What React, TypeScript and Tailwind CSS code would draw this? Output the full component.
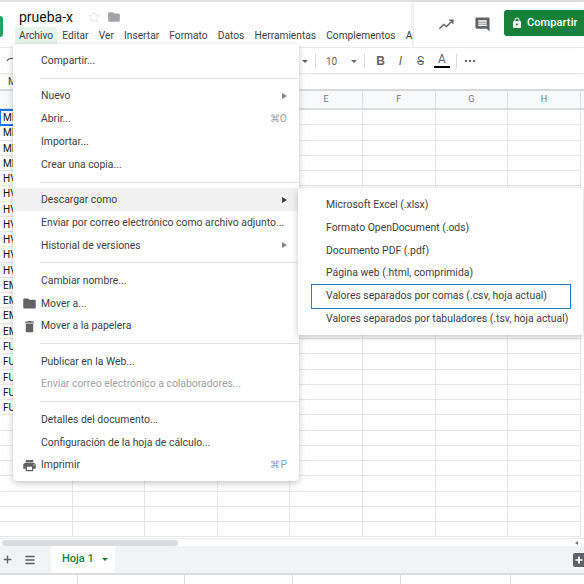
import React from "react";
import { MoreHorizontal, Plus, Star, Menu as MenuIcon } from "lucide-react";

const font = "font-['Roboto','Liberation_Sans',sans-serif]";
const labels = ["ME", "ME", "ME", "ME", "HV", "HV", "HV", "HV", "HV", "HV", "HV", "EM", "EM", "EM", "EM", "FU", "FU", "FU", "FU", "FU"];
const menus = ["Editar", "Ver", "Insertar", "Formato", "Datos", "Herramientas", "Complementos", "A"];

function FolderIcon({ className }: { className: string }) {
  return (
    <svg viewBox="0 0 24 24" className={className} fill="currentColor">
      <path d="M10 4H4C2.9 4 2 4.9 2 6v12c0 1.1.9 2 2 2h16c1.1 0 2-.9 2-2V8c0-1.1-.9-2-2-2h-8l-2-2z" />
    </svg>
  );
}

function TrashIcon() {
  return (
    <svg viewBox="0 0 24 24" className="w-[15px] h-[15px] text-[#5f6368]" fill="currentColor">
      <path d="M6 19c0 1.1.9 2 2 2h8c1.1 0 2-.9 2-2V7H6v12zM19 4h-3.5l-1-1h-5l-1 1H5v2h14V4z" />
    </svg>
  );
}

function PrintIcon() {
  return (
    <svg viewBox="0 0 24 24" className="w-[15px] h-[15px] text-[#5f6368]" fill="currentColor">
      <path d="M19 8H5c-1.66 0-3 1.34-3 3v6h4v4h12v-4h4v-6c0-1.66-1.34-3-3-3zm-3 11H8v-5h8v5zm3-7c-.55 0-1-.45-1-1s.45-1 1-1 1 .45 1 1-.45 1-1 1zm-1-9H6v4h12V3z" />
    </svg>
  );
}

function LockIcon() {
  return (
    <svg viewBox="0 0 24 24" className="w-[12px] h-[12px]" fill="currentColor">
      <path d="M18 8h-1V6c0-2.76-2.24-5-5-5S7 3.24 7 6v2H6c-1.1 0-2 .9-2 2v10c0 1.1.9 2 2 2h12c1.1 0 2-.9 2-2V10c0-1.1-.9-2-2-2zm-6 9c-1.1 0-2-.9-2-2s.9-2 2-2 2 .9 2 2-.9 2-2 2zm3.1-9H8.900V6c0-1.71 1.39-3.1 3.1-3.1s3.1 1.39 3.1 3.1v2z" />
    </svg>
  );
}

function Sep() {
  return <div className="h-px bg-[#e0e0e0] ml-[27px] my-[5.8px]" />;
}

function Item({
  label,
  icon,
  hint,
  arrow,
  active,
  muted,
}: {
  label: string;
  icon?: React.ReactNode;
  hint?: string;
  arrow?: boolean;
  active?: boolean;
  muted?: boolean;
}) {
  return (
    <div className={`h-[22.75px] flex items-center pr-[12px] ${active ? "bg-[#f1f1f1]" : ""}`}>
      <div className="w-[28px] pl-[4px] flex justify-center shrink-0">{icon}</div>
      <span className={`text-[10.4px] whitespace-nowrap ${muted ? "text-[#9aa0a6]" : "text-[#3c4043]"}`}>{label}</span>
      {hint && <span className="ml-auto text-[10.4px] text-[#9aa0a6]">{hint}</span>}
      {arrow && <span className={`ml-auto w-0 h-0 border-y-[3px] border-y-transparent border-l-[5px] ${active ? "border-l-[#3c4043]" : "border-l-[#80868b]"}`} />}
    </div>
  );
}

function SubItem({ label, boxed }: { label: string; boxed?: boolean }) {
  return (
    <div className={`flex items-center pl-[14px] border ${boxed ? "h-[25px] -my-px border-[#1f7fc4]" : "h-[22.75px] border-transparent"}`}>
      <span className="text-[10.4px] whitespace-nowrap text-[#3c4043]">{label}</span>
    </div>
  );
}

export default function App() {
  return (
    <div className={`${font} relative w-[584px] h-[584px] overflow-hidden bg-white flex flex-col text-[#202124]`}>
      {/* title + menus */}
      <div className="h-[47px] border-t-2 border-[#e0e0e0] flex shrink-0">
        <div className="w-[3px] h-[21px] mt-[14px] rounded-r-sm bg-[#1fa463] shrink-0" />
        <div className="w-[410px] pl-[16px] pt-[6px] overflow-hidden shrink-0">
          <div className="flex items-center h-[17px]">
            <span className="text-[14px] leading-none text-[#111]">prueba-x</span>
            <Star className="w-[12px] h-[12px] ml-[15px] text-[#dadce0]" strokeWidth={1.5} />
            <FolderIcon className="w-[14px] h-[14px] ml-[7px] text-[#a0a4a8]" />
          </div>
          <div className="flex text-[10.2px] text-[#3c4043] whitespace-nowrap mt-[2px] h-[18px] items-center gap-[10.2px]">
            <span className="bg-[#e6f4ea] rounded-t-[2px] px-[4px] h-[18px] leading-[18px] -ml-[4px] -mr-[5px]">Archivo</span>
            {menus.map((m) => (
              <span key={m}>{m}</span>
            ))}
          </div>
        </div>
        <div className="flex-1 flex items-center border-l border-[#eeeeee] shadow-[-2px_0_3px_rgba(0,0,0,0.06)] pl-[24px]">
          <svg viewBox="0 0 24 24" className="w-[17px] h-[17px] text-[#5f6368]" fill="none" stroke="currentColor" strokeWidth={2}>
            <path d="M2 18l6-6 4 3 9-9" />
            <path d="M16 6h5v5" />
          </svg>
          <svg viewBox="0 0 24 24" className="w-[17px] h-[17px] ml-[19px] text-[#5f6368]" fill="currentColor">
            <path d="M21.99 4c0-1.1-.89-2-1.99-2H4c-1.1 0-2 .9-2 2v12c0 1.1.9 2 2 2h14l4 4-.01-18zM18 14H6v-2h12v2zm0-3H6V9h12v2zm0-3H6V6h12v2z" />
          </svg>
          <div className="ml-[13px] w-[81px] h-[26px] mb-[3px] bg-[#188038] rounded-l-[3px] text-white flex items-center pl-[7px]">
            <LockIcon />
            <span className="ml-[4px] text-[11px] font-medium tracking-[0.1px]">Compartir</span>
          </div>
        </div>
      </div>

      {/* toolbar */}
      <div className="h-[27px] pt-[1px] border-t border-b border-[#e8eaed] shadow-[0_1px_2px_rgba(0,0,0,0.06)] flex items-center shrink-0 text-[#5f6368] text-[10px] pl-[302px] relative">
        <svg viewBox="0 0 24 24" className="absolute left-[5px] top-[6px] w-[12px] h-[12px] text-[#5f6368]" fill="none" stroke="currentColor" strokeWidth={2.5}>
          <path d="M4 14c3-6 11-7 16-2" />
        </svg>
        <span className="w-0 h-0 border-x-[3px] border-x-transparent border-t-[3px] border-t-[#5f6368]" />
        <span className="w-px h-[14px] bg-[#dadce0] ml-[7px]" />
        <span className="ml-[10px] w-[25px]">10</span>
        <span className="w-0 h-0 border-x-[3px] border-x-transparent border-t-[3px] border-t-[#5f6368]" />
        <span className="w-px h-[14px] bg-[#dadce0] ml-[7px]" />
        <span className="ml-[10px] w-[11px] text-center text-[12px] font-bold font-['Liberation_Sans']">B</span>
        <span className="ml-[9px] w-[11px] text-center text-[12px] italic font-['Liberation_Sans']">I</span>
        <span className="ml-[9px] w-[11px] text-center text-[12px] line-through">S</span>
        <span className="ml-[8px] w-[16px] flex flex-col items-center text-[12px] leading-[11px]">
          A<span className="w-[16px] h-[2px] bg-black mt-[1px]" />
        </span>
        <span className="w-px h-[14px] bg-[#dadce0] ml-[6px]" />
        <MoreHorizontal className="w-[14px] h-[14px] ml-[6px]" />
      </div>

      {/* formula bar */}
      <div className="h-[17px] border-b-2 border-[#d9d9d9] flex items-center text-[10px] pl-[8px] shrink-0 text-[#444]">M</div>

      {/* sheet */}
      <div className="relative flex-1 min-h-0 overflow-hidden">
        <div className="h-[19px] bg-[#f8f9fa] border-b-2 border-[#dcdcdc] grid grid-cols-[repeat(8,72.6px)] text-[9px] text-[#70757a]">
          {["", "", "", "", "E", "F", "G", "H"].map((c, i) => (
            <div key={i} className="border-r border-[#dedede] flex items-center justify-center">
              {c}
            </div>
          ))}
        </div>
        <div className="grid grid-cols-[repeat(8,72.6px)] auto-rows-[15.27px]">
          {Array.from({ length: 28 * 8 }).map((_, i) => {
            const row = Math.floor(i / 8);
            const isFirst = i % 8 === 0;
            return (
              <div
                key={i}
                className={`border-r border-b border-[#e6e6e6] text-[10px] leading-[15px] pl-[3px] overflow-hidden whitespace-nowrap text-[#111] ${isFirst && row === 0 ? "outline-2 -outline-offset-1 outline-[#1a73e8]" : ""}`}
              >
                {isFirst ? labels[row] : ""}
              </div>
            );
          })}
        </div>
      </div>

      {/* scrollbar strip */}
      <div className="h-[8px] bg-white shrink-0 flex items-center border-t border-[#e8eaed] relative">
        <div className="w-[176px] ml-[2px] h-[6px] rounded-full bg-[#dadce0]" />
        <span className="absolute right-[6px] top-[2px] w-0 h-0 border-y-[2px] border-y-transparent border-r-[3px] border-r-[#70757a]" />
      </div>

      {/* tabs */}
      <div className="h-[29px] bg-[#f1f3f4] border-b-2 border-[#dcdcdc] flex shrink-0 relative">
        <Plus className="w-[11px] h-[11px] ml-[2px] mt-[8px] text-[#5f6368]" strokeWidth={3} />
        <MenuIcon className="w-[12px] h-[12px] ml-[11px] mt-[8px] text-[#5f6368]" strokeWidth={3} />
        <div className="ml-[15px] w-[64px] h-[27px] bg-white text-[#188038] text-[11px] font-medium flex items-center pl-[11px]">
          Hoja 1
          <span className="ml-[8px] w-0 h-0 border-x-[3px] border-x-transparent border-t-[3px] border-t-[#188038]" />
        </div>
        <div className="absolute right-0 top-[7px] w-[11px] h-[14px] rounded-l-[2px] bg-[#5f6368] text-white flex items-center justify-center">
          <Plus className="w-[10px] h-[10px]" strokeWidth={4} />
        </div>
      </div>
      <div className="h-[9px] flex shrink-0 bg-white">
        <div className="w-[78px] border-r border-[#dadce0]" />
        <div className="w-[107px] border-r border-[#dadce0]" />
        <div className="w-[108px] border-r border-[#dadce0]" />
        <div className="w-[108px] border-r border-[#dadce0]" />
        <div className="w-[110px] border-r border-[#dadce0]" />
      </div>

      {/* file menu */}
      <div className="absolute left-[13px] top-[44px] w-[286px] h-[437px] bg-white rounded-[4px] shadow-[0_2px_6px_rgba(60,64,67,0.3)] pt-[5.5px] overflow-hidden">
        <Item label="Compartir..." />
        <Sep />
        <Item label="Nuevo" arrow />
        <Item label="Abrir..." hint="⌘O" />
        <Item label="Importar..." />
        <Item label="Crear una copia..." />
        <Sep />
        <Item label="Descargar como" arrow active />
        <Item label="Enviar por correo electrónico como archivo adjunto..." />
        <Item label="Historial de versiones" arrow />
        <Sep />
        <Item label="Cambiar nombre..." />
        <Item label="Mover a..." icon={<FolderIcon className="w-[15px] h-[15px] text-[#5f6368]" />} />
        <Item label="Mover a la papelera" icon={<TrashIcon />} />
        <Sep />
        <Item label="Publicar en la Web..." />
        <Item label="Enviar correo electrónico a colaboradores..." muted />
        <Sep />
        <Item label="Detalles del documento..." />
        <Item label="Configuración de la hoja de cálculo..." />
        <Item label="Imprimir" hint="⌘P" icon={<PrintIcon />} />
      </div>

      {/* download submenu */}
      <div className="absolute left-[298px] top-[188px] w-[285px] h-[147px] bg-white rounded-[3px] shadow-[0_2px_6px_rgba(60,64,67,0.3)] pt-[5.5px] pl-[13px] pr-[12px]">
        <SubItem label="Microsoft Excel (.xlsx)" />
        <SubItem label="Formato OpenDocument (.ods)" />
        <SubItem label="Documento PDF (.pdf)" />
        <SubItem label="Página web (.html, comprimida)" />
        <SubItem label="Valores separados por comas (.csv, hoja actual)" boxed />
        <SubItem label="Valores separados por tabuladores (.tsv, hoja actual)" />
      </div>
    </div>
  );
}
